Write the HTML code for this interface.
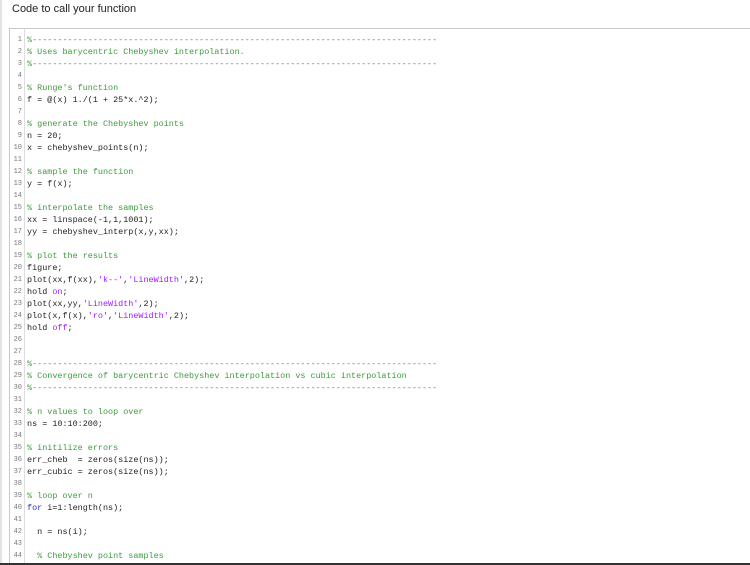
<!DOCTYPE html>
<html><head><meta charset="utf-8"><style>
html,body{margin:0;padding:0;background:#fff;width:750px;height:565px;overflow:hidden;position:relative}
.lb{position:absolute;left:0;top:0;width:2px;height:565px;background:#e4e4e4}
.title{position:absolute;left:12px;top:3px;font:11px "Liberation Sans",sans-serif;color:#222}
.box{position:absolute;left:9px;top:28px;width:745px;height:540px;border-top:1px solid #c8c8c8;border-left:1px solid #c8c8c8}
.gut{position:absolute;left:9px;top:29px;width:15px;height:540px;border-right:1px solid #ddd}
.bot{position:absolute;left:0;top:563px;width:750px;height:2px;background:#333}
.code{position:absolute;left:10px;top:34px;font:8.45px/12px "Liberation Mono",monospace;color:#222;white-space:pre}
.code div{height:12px;line-height:12px;overflow:hidden}
.n{display:inline-block;width:12px;text-align:right;color:#777;font-size:7px;margin-right:5px;line-height:12px;height:12px;vertical-align:top}
.c{color:#3e9a3e}.s{color:#a020f0}.k{color:#2b2bd8}
</style></head><body>
<div class="lb"></div>
<div class="title">Code to call your function</div>
<div class="box"></div><div class="gut"></div>
<div class="code"><div><span class="n">1</span><span class="c">%--------------------------------------------------------------------------------</span></div><div><span class="n">2</span><span class="c">% Uses barycentric Chebyshev interpolation.</span></div><div><span class="n">3</span><span class="c">%--------------------------------------------------------------------------------</span></div><div><span class="n">4</span></div><div><span class="n">5</span><span class="c">% Runge's function</span></div><div><span class="n">6</span>f = @(x) 1./(1 + 25*x.^2);</div><div><span class="n">7</span></div><div><span class="n">8</span><span class="c">% generate the Chebyshev points</span></div><div><span class="n">9</span>n = 20;</div><div><span class="n">10</span>x = chebyshev_points(n);</div><div><span class="n">11</span></div><div><span class="n">12</span><span class="c">% sample the function</span></div><div><span class="n">13</span>y = f(x);</div><div><span class="n">14</span></div><div><span class="n">15</span><span class="c">% interpolate the samples</span></div><div><span class="n">16</span>xx = linspace(-1,1,1001);</div><div><span class="n">17</span>yy = chebyshev_interp(x,y,xx);</div><div><span class="n">18</span></div><div><span class="n">19</span><span class="c">% plot the results</span></div><div><span class="n">20</span>figure;</div><div><span class="n">21</span>plot(xx,f(xx),<span class="s">'k--'</span>,<span class="s">'LineWidth'</span>,2);</div><div><span class="n">22</span>hold <span class="s">on</span>;</div><div><span class="n">23</span>plot(xx,yy,<span class="s">'LineWidth'</span>,2);</div><div><span class="n">24</span>plot(x,f(x),<span class="s">'ro'</span>,<span class="s">'LineWidth'</span>,2);</div><div><span class="n">25</span>hold <span class="s">off</span>;</div><div><span class="n">26</span></div><div><span class="n">27</span></div><div><span class="n">28</span><span class="c">%--------------------------------------------------------------------------------</span></div><div><span class="n">29</span><span class="c">% Convergence of barycentric Chebyshev interpolation vs cubic interpolation</span></div><div><span class="n">30</span><span class="c">%--------------------------------------------------------------------------------</span></div><div><span class="n">31</span></div><div><span class="n">32</span><span class="c">% n values to loop over</span></div><div><span class="n">33</span>ns = 10:10:200;</div><div><span class="n">34</span></div><div><span class="n">35</span><span class="c">% initilize errors</span></div><div><span class="n">36</span>err_cheb  = zeros(size(ns));</div><div><span class="n">37</span>err_cubic = zeros(size(ns));</div><div><span class="n">38</span></div><div><span class="n">39</span><span class="c">% loop over n</span></div><div><span class="n">40</span><span class="k">for</span> i=1:length(ns);</div><div><span class="n">41</span></div><div><span class="n">42</span>  n = ns(i);</div><div><span class="n">43</span></div><div><span class="n">44</span>  <span class="c">% Chebyshev point samples</span></div><div><span class="n">45</span>  x = chebyshev_points(n);</div></div>
<div class="bot"></div>
</body></html>
